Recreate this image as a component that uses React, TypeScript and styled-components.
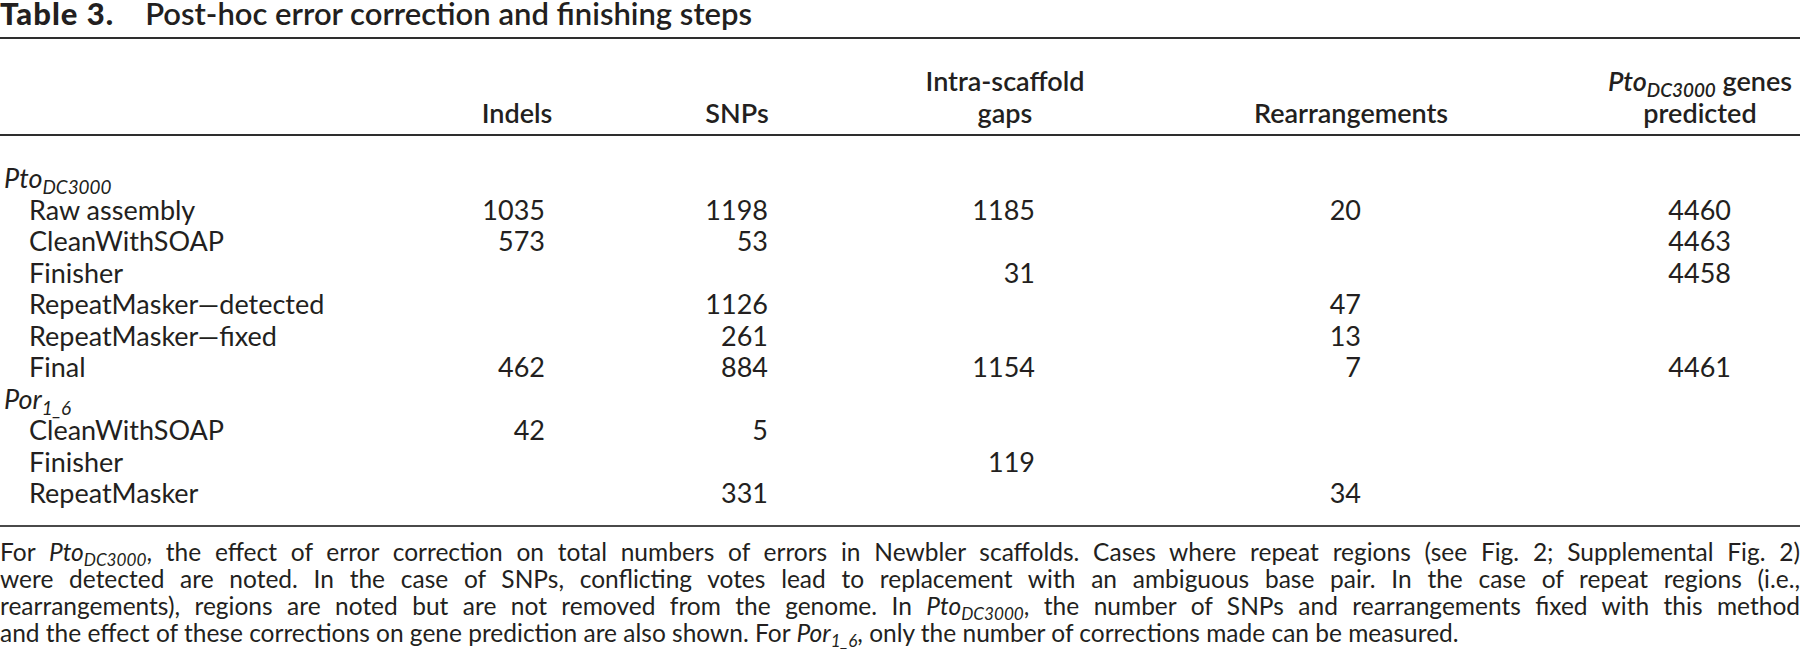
import React from "react";
import styled, { createGlobalStyle, css } from "styled-components";

const GlobalStyle = createGlobalStyle`
  html, body {
    margin: 0;
    padding: 0;
    background: #ffffff;
  }
  body {
    font-family: Lato, "Open Sans", "Noto Sans", sans-serif;
    color: #231f20;
    -webkit-font-smoothing: antialiased;
  }
`;

const Page = styled.div`
  width: 1800px;
  height: 654px;
  overflow: hidden;
  display: flex;
  flex-direction: column;
`;

const Title = styled.h1`
  margin: 0;
  padding: 0 0 11px 0;
  display: flex;
  gap: 31px;
  font-size: 31px;
  line-height: 26px;
  font-weight: 600;
  white-space: nowrap;
`;

const TitleLabel = styled.span`
  font-weight: 900;
  letter-spacing: 1px;
`;

const Rule = styled.div<{ $tone?: "dark" | "mid" }>`
  height: 2px;
  flex: none;
  background: ${(p) => (p.$tone === "mid" ? "#4a4a4a" : "#2e2e2e")};
`;

const columnTemplate = css`
  display: grid;
  grid-template-columns: 442px 150px 290px 246px 472px 200px;
`;

const HeadGrid = styled.div`
  ${columnTemplate};
  padding: 26px 0 5px 0;
  align-items: end;
`;

const HeadCell = styled.div<{ $pr?: number }>`
  text-align: center;
  font-size: 27px;
  line-height: 32px;
  font-weight: 600;
  white-space: nowrap;
  padding-right: ${(p) => p.$pr ?? 0}px;
`;

const BodyGrid = styled.div`
  ${columnTemplate};
  padding: 26px 0 16px 0;
`;

const LabelCell = styled.div<{ $indent?: boolean }>`
  font-size: 27px;
  line-height: 31.5px;
  white-space: nowrap;
  padding-left: ${(p) => (p.$indent ? 29 : 4)}px;
`;

const NumCell = styled.div<{ $pr: number }>`
  font-size: 27px;
  line-height: 31.5px;
  text-align: right;
  padding-right: ${(p) => p.$pr}px;
`;

const Em = styled.i`
  font-style: italic;
`;

const Sub = styled.span`
  font-style: italic;
  font-size: 0.7em;
  vertical-align: -0.3em;
  line-height: 0;
`;

const Caption = styled.div`
  padding: 11px 0 0 0;
  font-size: 24.5px;
  line-height: 27px;
`;

const CaptionLine = styled.div<{ $last?: boolean }>`
  white-space: nowrap;
  text-align: ${(p) => (p.$last ? "left" : "justify")};
  text-align-last: ${(p) => (p.$last ? "left" : "justify")};
`;

type Col = { pr: number; headPr?: number };

const COLS: Col[] = [
  { pr: 47 },
  { pr: 114 },
  { pr: 93 },
  { pr: 239, headPr: 26 },
  { pr: 69 },
];

const Species = ({ name, sub }: { name: string; sub: string }) => (
  <>
    <Em>{name}</Em>
    <Sub>{sub}</Sub>
  </>
);

type Row =
  | { kind: "group"; name: string; sub: string }
  | { kind: "data"; label: string; values: string[] };

const ROWS: Row[] = [
  { kind: "group", name: "Pto", sub: "DC3000" },
  { kind: "data", label: "Raw assembly", values: ["1035", "1198", "1185", "20", "4460"] },
  { kind: "data", label: "CleanWithSOAP", values: ["573", "53", "", "", "4463"] },
  { kind: "data", label: "Finisher", values: ["", "", "31", "", "4458"] },
  { kind: "data", label: "RepeatMasker\u2014detected", values: ["", "1126", "", "47", ""] },
  { kind: "data", label: "RepeatMasker\u2014fixed", values: ["", "261", "", "13", ""] },
  { kind: "data", label: "Final", values: ["462", "884", "1154", "7", "4461"] },
  { kind: "group", name: "Por", sub: "1_6" },
  { kind: "data", label: "CleanWithSOAP", values: ["42", "5", "", "", ""] },
  { kind: "data", label: "Finisher", values: ["", "", "119", "", ""] },
  { kind: "data", label: "RepeatMasker", values: ["", "331", "", "34", ""] },
];

const HEADERS: React.ReactNode[] = [
  "Indels",
  "SNPs",
  <>
    Intra-scaffold
    <br />
    gaps
  </>,
  "Rearrangements",
  <>
    <Species name="Pto" sub="DC3000" /> genes
    <br />
    predicted
  </>,
];

export default function App() {
  return (
    <>
      <GlobalStyle />
      <Page>
        <Title>
          <TitleLabel>Table 3.</TitleLabel>
          <span>Post-hoc error correction and finishing steps</span>
        </Title>
        <Rule />
        <HeadGrid>
          <HeadCell />
          {HEADERS.map((h, i) => (
            <HeadCell key={i} $pr={COLS[i].headPr}>
              {h}
            </HeadCell>
          ))}
        </HeadGrid>
        <Rule />
        <BodyGrid>
          {ROWS.map((row, r) =>
            row.kind === "group" ? (
              <React.Fragment key={r}>
                <LabelCell>
                  <Species name={row.name} sub={row.sub} />
                </LabelCell>
                {COLS.map((c, i) => (
                  <NumCell key={i} $pr={c.pr} />
                ))}
              </React.Fragment>
            ) : (
              <React.Fragment key={r}>
                <LabelCell $indent>{row.label}</LabelCell>
                {row.values.map((v, i) => (
                  <NumCell key={i} $pr={COLS[i].pr}>
                    {v}
                  </NumCell>
                ))}
              </React.Fragment>
            )
          )}
        </BodyGrid>
        <Rule $tone="mid" />
        <Caption>
          <CaptionLine>
            For <Species name="Pto" sub="DC3000" />, the effect of error correction on total numbers of
            errors in Newbler scaffolds. Cases where repeat regions (see Fig. 2; Supplemental Fig. 2)
          </CaptionLine>
          <CaptionLine>
            were detected are noted. In the case of SNPs, conflicting votes lead to replacement with an
            ambiguous base pair. In the case of repeat regions (i.e.,
          </CaptionLine>
          <CaptionLine>
            rearrangements), regions are noted but are not removed from the genome. In{" "}
            <Species name="Pto" sub="DC3000" />, the number of SNPs and rearrangements fixed with this method
          </CaptionLine>
          <CaptionLine $last>
            and the effect of these corrections on gene prediction are also shown. For{" "}
            <Species name="Por" sub="1_6" />, only the number of corrections made can be measured.
          </CaptionLine>
        </Caption>
      </Page>
    </>
  );
}
